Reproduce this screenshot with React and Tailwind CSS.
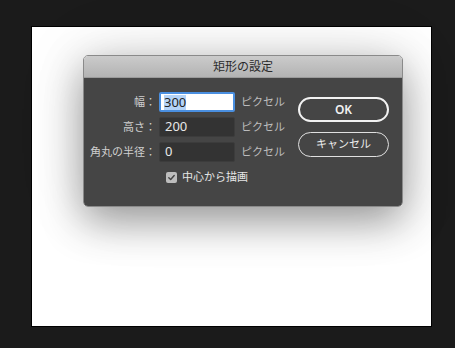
export default function App() {
  const font = { fontFamily: '"Noto Sans", "Noto Sans CJK JP", sans-serif' };
  return (
    <div className="w-[455px] h-[348px] bg-[#1b1b1b] pt-[26px] pl-[31px]" style={font}>
      {/* canvas */}
      <div className="w-[401px] h-[301px] bg-white border border-black pl-[51px] pt-[28px]">
        {/* dialog */}
        <div className="w-[320px] rounded-[5px] overflow-hidden border border-[#8a8a8a] shadow-[0_14px_40px_rgba(0,0,0,0.38),0_0_70px_rgba(0,0,0,0.10)]">
          <div className="h-[22px] bg-gradient-to-b from-[#cbcbcb] to-[#b3b3b3] border-b border-[#9a9a9a] flex items-center justify-center text-[12px] text-[#2a2a2a]">
            矩形の設定
          </div>
          <div className="h-[128px] bg-[#454545] flex pt-[14px]">
            <div className="w-[214px] flex flex-col">
              <Row label="幅：" value="300" focused />
              <Row label="高さ：" value="200" />
              <Row label="角丸の半径：" value="0" />
              <div className="flex items-center mt-[9px] pl-[82px] h-[12px]">
                <div className="w-[11px] h-[11px] rounded-[2px] bg-[#bdbdbd] flex items-center justify-center">
                  <svg viewBox="0 0 10 10" className="w-[9px] h-[9px]">
                    <path d="M2 5.2 L4.1 7.3 L8 2.8" fill="none" stroke="#454545" strokeWidth="1.6" strokeLinecap="round" strokeLinejoin="round" />
                  </svg>
                </div>
                <span className="ml-[5px] text-[11px] text-[#e6e6e6]">中心から描画</span>
              </div>
            </div>
            <div className="flex flex-col pt-[5px] gap-[10px]">
              <button className="w-[91px] h-[25px] rounded-full border-2 border-[#f2f2f2] text-[12px] font-semibold text-[#f2f2f2] flex items-center justify-center">
                OK
              </button>
              <button className="w-[91px] h-[25px] rounded-full border border-[#e0e0e0] text-[11px] text-[#ececec] flex items-center justify-center">
                キャンセル
              </button>
            </div>
          </div>
        </div>
      </div>
    </div>
  );
}

function Row({ label, value, focused }) {
  return (
    <div className="flex items-center h-[20px] mt-[5px] first:mt-0">
      <span className="w-[72px] text-right text-[11px] text-[#cfcfcf] whitespace-nowrap">{label}</span>
      <div
        className={
          focused
            ? "ml-[3px] w-[76px] h-[20px] bg-white border-2 border-[#4a8fe0] rounded-[2px] flex items-center pl-[3px]"
            : "ml-[3px] w-[76px] h-[20px] bg-[#333333] border border-[#3c3c3c] rounded-[2px] flex items-center pl-[5px]"
        }
      >
        {focused ? (
          <span className="text-[13px] leading-[15px] bg-[#b4d3f7] text-[#222]">{value}</span>
        ) : (
          <span className="text-[13px] text-[#e8e8e8]">{value}</span>
        )}
      </div>
      <span className="ml-[6px] text-[11px] text-[#bdbdbd]">ピクセル</span>
    </div>
  );
}
